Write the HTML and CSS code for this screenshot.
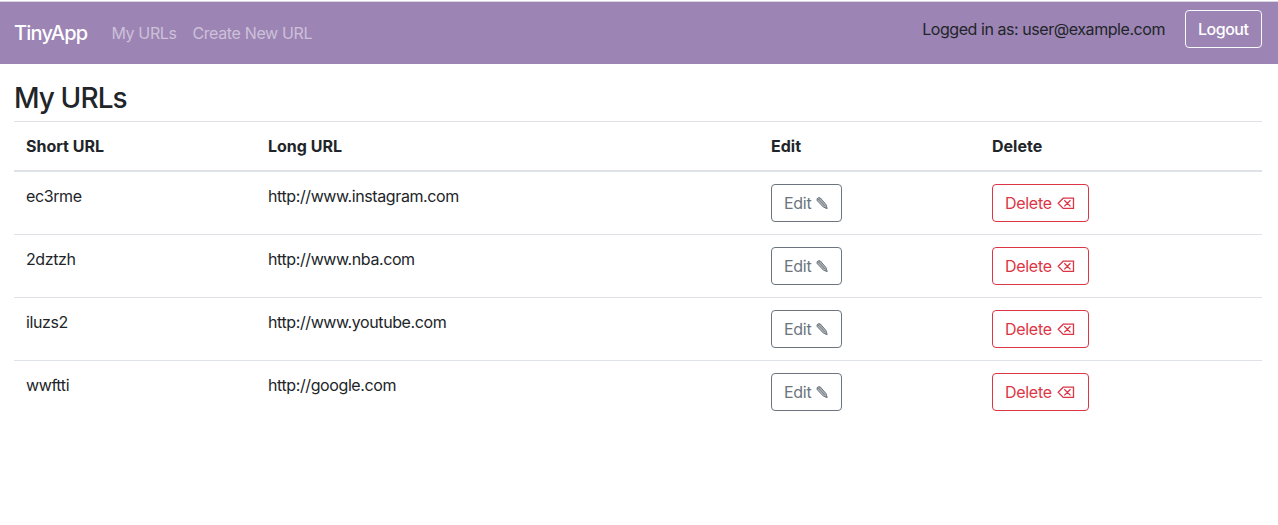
FILE: index.html
```html
<!DOCTYPE html>
<html lang="en">
<head>
<meta charset="utf-8">
<title>TinyApp</title>
<link rel="stylesheet" href="styles.css">
</head>
<body>
<svg class="sprite" aria-hidden="true">
  <symbol id="pencil" viewBox="0 0 12 13">
    <path d="M1 1.8 2.6.6 4.4 1 10 7.6l1.2 4-3.8-1.5L1.2 3.6z" fill="currentColor" fill-opacity=".55" stroke="currentColor" stroke-width="1"/>
    <path d="M2.8 2.2 8.8 9M1.6 3.2 3.6 1.4" fill="none" stroke="currentColor" stroke-width=".8"/>
    <path d="m9.6 10 1.6 1.8-2-.7z" fill="currentColor"/>
  </symbol>
  <symbol id="erase" viewBox="0 0 18 13">
    <path d="M6.2 1.2H16.5V11.4H6.2L1.2 6.3zM7.3 3.2l6.2 6.2M13.5 3.2 7.3 9.4" fill="none" stroke="currentColor" stroke-width="1.3"/>
  </symbol>
</svg>
<header class="navbar">
  <a class="brand">TinyApp</a>
  <nav class="links"><a class="link-urls">My URLs</a><a class="link-new">Create New URL</a></nav>
  <div class="account">
    <span class="user">Logged in as: user@example.com</span>
    <button class="btn btn-light">Logout</button>
  </div>
</header>
<main class="content">
  <h3 class="title">My URLs</h3>
  <table class="table">
    <colgroup><col class="col-short"><col class="col-long"><col class="col-edit"><col class="col-delete"></colgroup>
    <thead>
      <tr><th>Short URL</th><th>Long URL</th><th>Edit</th><th>Delete</th></tr>
    </thead>
    <tbody>
      <tr><td>ec3rme</td><td>http://www.instagram.com</td>
        <td><button class="btn btn-edit">Edit <svg class="pencil"><use href="#pencil"/></svg></button></td>
        <td><button class="btn btn-delete">Delete <svg class="erase"><use href="#erase"/></svg></button></td></tr>
      <tr><td>2dztzh</td><td>http://www.nba.com</td>
        <td><button class="btn btn-edit">Edit <svg class="pencil"><use href="#pencil"/></svg></button></td>
        <td><button class="btn btn-delete">Delete <svg class="erase"><use href="#erase"/></svg></button></td></tr>
      <tr><td>iluzs2</td><td>http://www.youtube.com</td>
        <td><button class="btn btn-edit">Edit <svg class="pencil"><use href="#pencil"/></svg></button></td>
        <td><button class="btn btn-delete">Delete <svg class="erase"><use href="#erase"/></svg></button></td></tr>
      <tr><td>wwftti</td><td>http://google.com</td>
        <td><button class="btn btn-edit">Edit <svg class="pencil"><use href="#pencil"/></svg></button></td>
        <td><button class="btn btn-delete">Delete <svg class="erase"><use href="#erase"/></svg></button></td></tr>
    </tbody>
  </table>
</main>
</body>
</html>
```
FILE: styles.css
```css
* { box-sizing: border-box; }
body {
  margin: 0;
  background: #fff;
  color: #212529;
  font: 400 16px/24px Inter, "Liberation Sans", sans-serif;
  letter-spacing: -0.4px;
}
.sprite { display: none; }
.navbar {
  display: flex;
  align-items: flex-start;
  height: 64px;
  padding: 8px 16px 0 14px;
  border-top: 1px solid #fff;
  background: #9c84b4;
  box-shadow: inset 0 1px #d9d5df;
}
.brand {
  width: 97px;
  padding-top: 9px;
  color: #fff;
  font-size: 20px;
  font-weight: 500;
  line-height: 30px;
  letter-spacing: -0.8px;
}
.links {
  display: flex;
  gap: 16px;
  padding: 12px 0 0 .4px;
  color: rgba(255, 255, 255, .5);
  letter-spacing: -0.36px;
}
.link-urls { width: 65px; }
.links, .brand { white-space: nowrap; }
.account {
  display: flex;
  gap: 20px;
  margin-left: auto;
  padding-top: 1px;
}
.user { padding-top: 7px; letter-spacing: -0.44px; }
.btn {
  display: flex;
  align-items: center;
  height: 38px;
  padding: 0 12px;
  border: 1px solid currentColor;
  border-radius: 4px;
  background: none;
  font: inherit;
  letter-spacing: inherit;
  white-space: nowrap;
}
.btn-light {
  width: 77px;
  color: #fff;
  border-color: #f8f9fa;
  font-weight: 500;
  letter-spacing: -0.5px;
}
.btn-edit, .btn-delete {
  justify-content: space-between;
  padding-right: 13px;
  letter-spacing: -0.3px;
}
.btn-edit { width: 71px; color: #6c757d; }
.btn-delete { width: 97px; color: #dc3545; }
.pencil { width: 12px; height: 13px; }
.erase { width: 18px; height: 13px; }
.content { padding: 18px 16px 0 14px; }
.title {
  margin: 0 0 6px;
  font-size: 28px;
  font-weight: 500;
  line-height: 33px;
  letter-spacing: -0.9px;
}
.table {
  width: 100%;
  table-layout: fixed;
  border-spacing: 0;
}
.col-short { width: 242px; }
.col-long { width: 503px; }
.col-edit { width: 221px; }
.table th, .table td {
  padding: 12px;
  text-align: left;
  vertical-align: top;
}
.table th {
  border-top: 1px solid #dee2e6;
  border-bottom: 2px solid #dee2e6;
  font-weight: 700;
  letter-spacing: 0;
}
.table tr + tr td { border-top: 1px solid #dee2e6; }
```
